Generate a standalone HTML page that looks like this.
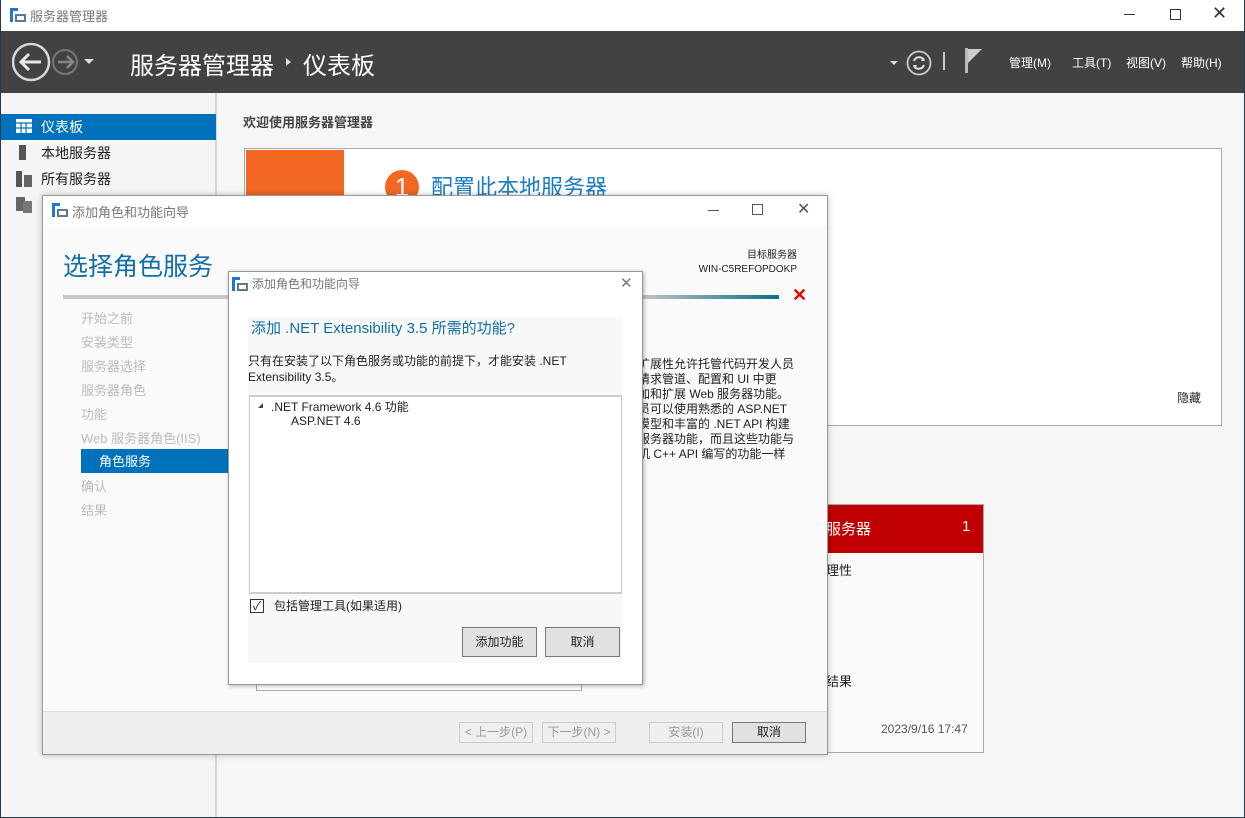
<!DOCTYPE html>
<html><head><meta charset="utf-8"><style>
*{margin:0;padding:0;box-sizing:border-box}
body{width:1245px;height:818px;overflow:hidden;background:#f6f6f6;font-family:"Liberation Sans","Noto Sans CJK SC",sans-serif;font-size:13px;color:#1e1e1e;position:relative}
.a{position:absolute;white-space:nowrap}
</style></head><body>
<div class="a" style="left:0;top:0;width:1245px;height:818px;border:1px solid #2b3a4a;border-top:none"></div>
<div class="a" style="left:1px;top:0;width:1243px;height:31px;background:#fff"></div>
<svg class="a" style="left:10px;top:8px" width="16" height="14"><rect x="0" y="0" width="3" height="14" fill="#1e7ad0"/><rect x="0" y="0" width="8" height="3" fill="#1e7ad0"/><rect x="5" y="6" width="11" height="8" fill="#5e7a90"/><rect x="7" y="8" width="7" height="4" fill="#fff"/></svg>
<div class="a" style="left:30px;top:6px;color:#777;font-size:13px">服务器管理器</div>
<div class="a" style="left:1124px;top:14px;width:11px;height:1px;background:#333"></div>
<div class="a" style="left:1170px;top:9px;width:11px;height:11px;border:1px solid #333"></div>
<div class="a" style="left:1212px;top:3px;font-size:18px;color:#333">✕</div>
<div class="a" style="left:1px;top:31px;width:1243px;height:62px;background:#424242"></div>
<svg class="a" style="left:12px;top:42px" width="85" height="40"><circle cx="19" cy="20" r="18" fill="none" stroke="#d8d8d8" stroke-width="2.5"/><path d="M29 20H10M17 12l-8 8 8 8" stroke="#e8e8e8" stroke-width="3" fill="none"/><circle cx="53" cy="20" r="12" fill="none" stroke="#777" stroke-width="2"/><path d="M46 20H60M55 14l6 6-6 6" stroke="#888" stroke-width="2.5" fill="none"/><path d="M72 17h10l-5 5z" fill="#ddd"/></svg>
<div class="a" style="left:130px;top:46px;color:#fff;font-size:24px">服务器管理器</div>
<div class="a" style="left:286px;top:58px;width:0;height:0;border-left:5px solid #ddd;border-top:4px solid transparent;border-bottom:4px solid transparent"></div>
<div class="a" style="left:303px;top:46px;color:#fff;font-size:24px">仪表板</div>
<div class="a" style="left:890px;top:61px;width:0;height:0;border-top:4px solid #ddd;border-left:4px solid transparent;border-right:4px solid transparent"></div>
<svg class="a" style="left:906px;top:50px" width="26" height="26"><circle cx="13" cy="13" r="11.5" fill="none" stroke="#ccc" stroke-width="1.8"/><path d="M8 11a5.5 5.5 0 0 1 10-1M18 15a5.5 5.5 0 0 1-10 1" stroke="#ddd" stroke-width="2" fill="none"/><path d="M17 7l2 4-4 0z M9 19l-2-4 4 0z" fill="#ddd"/></svg>
<div class="a" style="left:943px;top:52px;width:2px;height:18px;background:#ccc"></div>
<svg class="a" style="left:965px;top:48px" width="20" height="26"><rect x="0" y="0" width="3" height="25" fill="#bbb"/><path d="M3 1h14l-14 14z" fill="#ccc"/></svg>
<div class="a" style="left:1009px;top:54px;color:#fff;font-size:12px">管理(M)</div>
<div class="a" style="left:1072px;top:54px;color:#fff;font-size:12px">工具(T)</div>
<div class="a" style="left:1126px;top:54px;color:#fff;font-size:12px">视图(V)</div>
<div class="a" style="left:1181px;top:54px;color:#fff;font-size:12px">帮助(H)</div>
<div class="a" style="left:1px;top:93px;width:216px;height:724px;background:#f5f5f5;border-right:2px solid #d4d4d4"></div>
<div class="a" style="left:1px;top:114px;width:215px;height:26px;background:#0072bc"></div>
<svg class="a" style="left:16px;top:119px" width="16" height="14"><rect width="16" height="14" fill="#fff"/><path d="M0 4h16M0 9h16M5 4v10M10 4v10" stroke="#0072bc" stroke-width="1.2"/></svg>
<div class="a" style="left:41px;top:117px;color:#fff;font-size:14px">仪表板</div>
<div class="a" style="left:19px;top:145px;width:7px;height:15px;background:#555"></div>
<div class="a" style="left:41px;top:143px;font-size:14px">本地服务器</div>
<svg class="a" style="left:16px;top:171px" width="17" height="16"><rect x="0" y="0" width="6" height="16" fill="#555"/><rect x="8" y="4" width="8" height="12" fill="#666"/></svg>
<div class="a" style="left:41px;top:169px;font-size:14px">所有服务器</div>
<svg class="a" style="left:16px;top:197px" width="17" height="16"><rect x="0" y="0" width="9" height="14" fill="#666"/><rect x="7" y="4" width="9" height="12" fill="#777"/></svg>
<div class="a" style="left:243px;top:112px;font-size:13px;font-weight:bold;color:#444">欢迎使用服务器管理器</div>
<div class="a" style="left:244px;top:148px;width:978px;height:278px;background:#fff;border:1px solid #aaa"></div>
<div class="a" style="left:246px;top:150px;width:98px;height:60px;background:#f26722"></div>
<div class="a" style="left:385px;top:170px;width:34px;height:34px;border-radius:50%;background:#f26722;color:#fff;font-size:26px;text-align:center;line-height:34px">1</div>
<div class="a" style="left:431px;top:170px;color:#1b7cc3;font-size:22px">配置此本地服务器</div>
<div class="a" style="left:1177px;top:389px;font-size:12px">隐藏</div>
<div class="a" style="left:820px;top:504px;width:164px;height:249px;background:#fafafa;border:1px solid #aaa"></div>
<div class="a" style="left:821px;top:505px;width:162px;height:48px;background:#c00000"></div>
<div class="a" style="left:826px;top:518px;color:#fff;font-size:15px">服务器</div>
<div class="a" style="left:962px;top:518px;color:#fff;font-size:15px">1</div>
<div class="a" style="left:826px;top:560px;font-size:13px">理性</div>
<div class="a" style="left:826px;top:671px;font-size:13px">结果</div>
<div class="a" style="left:881px;top:722px;font-size:12px;color:#555">2023/9/16 17:47</div>
<div class="a" style="left:42px;top:195px;width:786px;height:560px;background:#fafafa;border:1px solid #999;box-shadow:0 0 6px rgba(0,0,0,.25)"></div>
<div class="a" style="left:43px;top:196px;width:784px;height:30px;background:#fff"></div>
<svg class="a" style="left:52px;top:203px" width="16" height="14"><rect x="0" y="0" width="3" height="14" fill="#1e7ad0"/><rect x="0" y="0" width="8" height="3" fill="#1e7ad0"/><rect x="5" y="6" width="11" height="8" fill="#5e7a90"/><rect x="7" y="8" width="7" height="4" fill="#fff"/></svg>
<div class="a" style="left:72px;top:202px;color:#777;font-size:13px">添加角色和功能向导</div>
<div class="a" style="left:708px;top:210px;width:11px;height:1px;background:#555"></div>
<div class="a" style="left:752px;top:204px;width:11px;height:11px;border:1px solid #555"></div>
<div class="a" style="left:797px;top:199px;font-size:16px;color:#555">✕</div>
<div class="a" style="left:63px;top:247px;color:#106ea8;font-size:25px">选择角色服务</div>
<div class="a" style="left:640px;top:249px;font-size:10px;width:157px;text-align:right;line-height:14px">目标服务器<br>WIN-C5REFOPDOKP</div>
<div class="a" style="left:63px;top:295px;width:716px;height:4px;background:linear-gradient(90deg,#c8c8c8 0%,#c8c8c8 80%,#0e6e8c 100%)"></div>
<div class="a" style="left:792px;top:285px;color:#e00;font-size:18px;font-weight:bold">✕</div>
<div class="a" style="left:81px;top:307px;color:#bbb;font-size:13px;line-height:24px">开始之前<br>安装类型<br>服务器选择<br>服务器角色<br>功能<br>Web 服务器角色(IIS)</div>
<div class="a" style="left:81px;top:449px;width:150px;height:24px;background:#0072bc;color:#fff;padding:2px 0 0 18px;font-size:13px">角色服务</div>
<div class="a" style="left:81px;top:475px;color:#bbb;font-size:13px;line-height:24px">确认<br>结果</div>
<div class="a" style="left:638px;top:357px;font-size:12px;line-height:15px;width:160px;overflow:hidden">扩展性允许托管代码开发人员<br>请求管道、配置和 UI 中更<br>加和扩展 Web 服务器功能。<br>员可以使用熟悉的 ASP.NET<br>模型和丰富的 .NET API 构建<br>服务器功能，而且这些功能与<br>机 C++ API 编写的功能一样</div>
<div class="a" style="left:256px;top:660px;width:326px;height:31px;background:#fff;border:1px solid #aaa"></div>
<div class="a" style="left:43px;top:711px;width:784px;height:43px;background:#efefef;border-top:1px solid #ddd"></div>
<div class="a" style="left:459px;top:722px;width:74px;height:21px;border:1px solid #ccc;color:#999;font-size:12px;text-align:center;line-height:19px">&lt; 上一步(P)</div>
<div class="a" style="left:542px;top:722px;width:74px;height:21px;border:1px solid #ccc;color:#999;font-size:12px;text-align:center;line-height:19px">下一步(N) &gt;</div>
<div class="a" style="left:649px;top:722px;width:74px;height:21px;border:1px solid #ccc;color:#999;font-size:12px;text-align:center;line-height:19px">安装(I)</div>
<div class="a" style="left:732px;top:722px;width:74px;height:21px;border:1px solid #777;background:#e1e1e1;font-size:12px;text-align:center;line-height:19px">取消</div>
<div class="a" style="left:228px;top:271px;width:415px;height:414px;background:#fff;border:1px solid #999;box-shadow:1px 1px 4px rgba(0,0,0,.3)"></div>
<svg class="a" style="left:232px;top:277px" width="16" height="14"><rect x="0" y="0" width="3" height="14" fill="#1e7ad0"/><rect x="0" y="0" width="8" height="3" fill="#1e7ad0"/><rect x="5" y="6" width="11" height="8" fill="#5e7a90"/><rect x="7" y="8" width="7" height="4" fill="#fff"/></svg>
<div class="a" style="left:252px;top:275px;color:#777;font-size:12px">添加角色和功能向导</div>
<div class="a" style="left:620px;top:274px;font-size:15px;color:#777">✕</div>
<div class="a" style="left:248px;top:317px;width:374px;height:346px;background:#f8f8f8"></div>
<div class="a" style="left:251px;top:317px;color:#106ea8;font-size:15px">添加 .NET Extensibility 3.5 所需的功能?</div>
<div class="a" style="left:248px;top:353px;font-size:12px;line-height:16px">只有在安装了以下角色服务或功能的前提下，才能安装 .NET<br>Extensibility 3.5。</div>
<div class="a" style="left:249px;top:395px;width:373px;height:199px;background:#fff;border:1px solid #ccc;border-width:2px 1px 2px 1px"></div>
<div class="a" style="left:258px;top:403px;width:0;height:0;border-right:5px solid #444;border-top:5px solid transparent"></div>
<div class="a" style="left:271px;top:398px;font-size:12px">.NET Framework 4.6 功能</div>
<div class="a" style="left:291px;top:414px;font-size:12px">ASP.NET 4.6</div>
<div class="a" style="left:250px;top:599px;width:14px;height:14px;border:1px solid #333;background:#fff;font-size:12px;line-height:12px;text-align:center">✓</div>
<div class="a" style="left:274px;top:597px;font-size:12px">包括管理工具(如果适用)</div>
<div class="a" style="left:462px;top:627px;width:75px;height:30px;border:1px solid #777;background:#e1e1e1;font-size:12px;text-align:center;line-height:28px">添加功能</div>
<div class="a" style="left:545px;top:627px;width:75px;height:30px;border:1px solid #777;background:#e1e1e1;font-size:12px;text-align:center;line-height:28px">取消</div>
</body></html>
